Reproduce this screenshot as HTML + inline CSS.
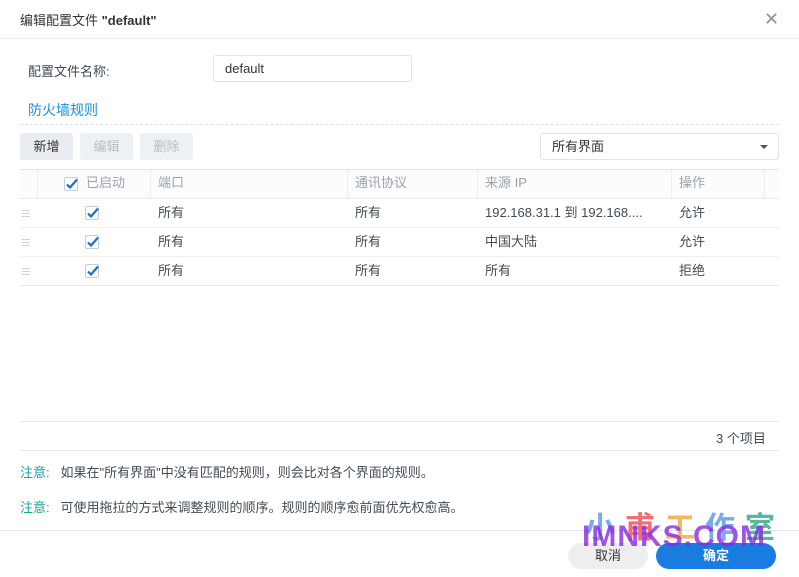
<!DOCTYPE html>
<html><head><meta charset="utf-8"><style>
*{margin:0;padding:0;box-sizing:border-box}
body{width:799px;height:577px;background:#fff;font-family:"Liberation Sans","Noto Sans CJK SC",sans-serif;font-size:13px;color:#414b55;position:relative;overflow:hidden}
.a{position:absolute;white-space:nowrap}
.hl{position:absolute;height:1px;background:#e6e9ec}
.btn{position:absolute;height:27px;border-radius:3px;background:#e9edf1;text-align:center;line-height:27px}
.cb{position:absolute;width:14px;height:14px;border:1px solid #c5ccd4;border-radius:2px;background:#fff}
.cb svg{position:absolute;left:-1px;top:-2px}
.cell{position:absolute;line-height:28px}
.vl{position:absolute;width:1px;background:#eceff2;top:170px;height:28px}
.drag{position:absolute;left:22px;width:8px;height:7px;border-top:1px solid #cfd4da;border-bottom:1px solid #cfd4da}
.drag:after{content:"";position:absolute;left:0;right:0;top:2px;height:1px;background:#cfd4da}
</style></head><body>
<div class="a" style="left:20px;top:10px;font-size:13px;color:#333">编辑配置文件 <b>"default"</b></div>
<div class="a" style="left:764px;top:9px;font-size:18px;color:#8a939c">✕</div>
<div class="hl" style="left:0;top:38px;width:799px;background:#edf0f2"></div>
<div class="a" style="left:28px;top:61px">配置文件名称:</div>
<div class="a" style="left:213px;top:55px;width:199px;height:27px;border:1px solid #dfe3e7;border-radius:3px;padding-left:11px;line-height:25px;color:#333">default</div>
<div class="a" style="left:28px;top:100px;font-size:14px;color:#1a8fe0">防火墙规则</div>
<div class="a" style="left:20px;top:124px;width:759px;border-top:1px dashed #dde1e5"></div>
<div class="btn" style="left:20px;top:133px;width:53px;color:#333">新增</div>
<div class="btn" style="left:80px;top:133px;width:53px;color:#b6bec6;background:#eef1f4">编辑</div>
<div class="btn" style="left:140px;top:133px;width:53px;color:#b6bec6;background:#eef1f4">删除</div>
<div class="a" style="left:540px;top:133px;width:239px;height:27px;border:1px solid #dfe3e7;border-radius:3px;padding-left:11px;line-height:25px;color:#333">所有界面<span style="position:absolute;right:10px;top:11px;border-left:4px solid transparent;border-right:4px solid transparent;border-top:4px solid #555"></span></div>
<div class="hl" style="left:20px;top:169px;width:759px;background:#e1e5e9"></div>
<div class="a" style="left:20px;top:170px;width:759px;height:28px;background:#fcfcfd"></div>
<div class="vl" style="left:37px"></div><div class="vl" style="left:150px"></div><div class="vl" style="left:347px"></div><div class="vl" style="left:477px"></div><div class="vl" style="left:671px"></div><div class="vl" style="left:764px"></div>
<div class="cb" style="left:64px;top:177px"><svg width="16" height="16" viewBox="0 0 16 16"><path d="M3 8.5l3 3 7-8" fill="none" stroke="#1a6fd0" stroke-width="2.2"/></svg></div>
<div class="cell" style="left:86px;top:169px;color:#9aa3ac">已启动</div>
<div class="cell" style="left:158px;top:169px;color:#9aa3ac">端口</div>
<div class="cell" style="left:355px;top:169px;color:#9aa3ac">通讯协议</div>
<div class="cell" style="left:485px;top:169px;color:#9aa3ac">来源 IP</div>
<div class="cell" style="left:679px;top:169px;color:#9aa3ac">操作</div>
<div class="hl" style="left:20px;top:198px;width:759px"></div>

<div class="drag" style="top:210px"></div>
<div class="cb" style="left:85px;top:206px"><svg width="16" height="16" viewBox="0 0 16 16"><path d="M3 8.5l3 3 7-8" fill="none" stroke="#1a6fd0" stroke-width="2.2"/></svg></div>
<div class="cell" style="left:158px;top:199px">所有</div><div class="cell" style="left:355px;top:199px">所有</div><div class="cell" style="left:485px;top:199px">192.168.31.1 到 192.168....</div><div class="cell" style="left:679px;top:199px">允许</div>
<div class="hl" style="left:20px;top:227px;width:759px;background:#eef0f2"></div>

<div class="drag" style="top:239px"></div>
<div class="cb" style="left:85px;top:235px"><svg width="16" height="16" viewBox="0 0 16 16"><path d="M3 8.5l3 3 7-8" fill="none" stroke="#1a6fd0" stroke-width="2.2"/></svg></div>
<div class="cell" style="left:158px;top:228px">所有</div><div class="cell" style="left:355px;top:228px">所有</div><div class="cell" style="left:485px;top:228px">中国大陆</div><div class="cell" style="left:679px;top:228px">允许</div>
<div class="hl" style="left:20px;top:256px;width:759px;background:#eef0f2"></div>

<div class="drag" style="top:268px"></div>
<div class="cb" style="left:85px;top:264px"><svg width="16" height="16" viewBox="0 0 16 16"><path d="M3 8.5l3 3 7-8" fill="none" stroke="#1a6fd0" stroke-width="2.2"/></svg></div>
<div class="cell" style="left:158px;top:257px">所有</div><div class="cell" style="left:355px;top:257px">所有</div><div class="cell" style="left:485px;top:257px">所有</div><div class="cell" style="left:679px;top:257px">拒绝</div>
<div class="hl" style="left:20px;top:285px;width:759px"></div>

<div class="hl" style="left:20px;top:421px;width:759px"></div>
<div class="a" style="left:716px;top:428px">3 个项目</div>
<div class="hl" style="left:20px;top:450px;width:759px"></div>
<div class="a" style="left:20px;top:462px"><span style="color:#1aa39a">注意:</span>&nbsp;&nbsp;&nbsp;如果在"所有界面"中没有匹配的规则，则会比对各个界面的规则。</div>
<div class="a" style="left:20px;top:497px"><span style="color:#1aa39a">注意:</span>&nbsp;&nbsp;&nbsp;可使用拖拉的方式来调整规则的顺序。规则的顺序愈前面优先权愈高。</div>
<div class="hl" style="left:0;top:530px;width:799px"></div>
<div class="a" style="left:568px;top:543px;width:80px;height:26px;border-radius:13px;background:#eceef0;text-align:center;line-height:26px;color:#333">取消</div>
<div class="a" style="left:656px;top:543px;width:120px;height:26px;border-radius:13px;background:#1a7be0;text-align:center;line-height:26px;color:#fff;font-weight:bold">确定</div>
<div class="a" style="left:585px;top:503px;font-size:30px;letter-spacing:10px;opacity:.75;font-weight:bold"><span style="color:#4a90e2">小</span><span style="color:#f04040">甫</span><span style="color:#f0a030">工</span><span style="color:#4a90e2">作</span><span style="color:#20a080">室</span></div>
<div class="a" style="left:582px;top:520px;font-size:30px;font-weight:bold;color:#8a2be2;opacity:.8;letter-spacing:1px">IMNKS.COM</div>
</body></html>
